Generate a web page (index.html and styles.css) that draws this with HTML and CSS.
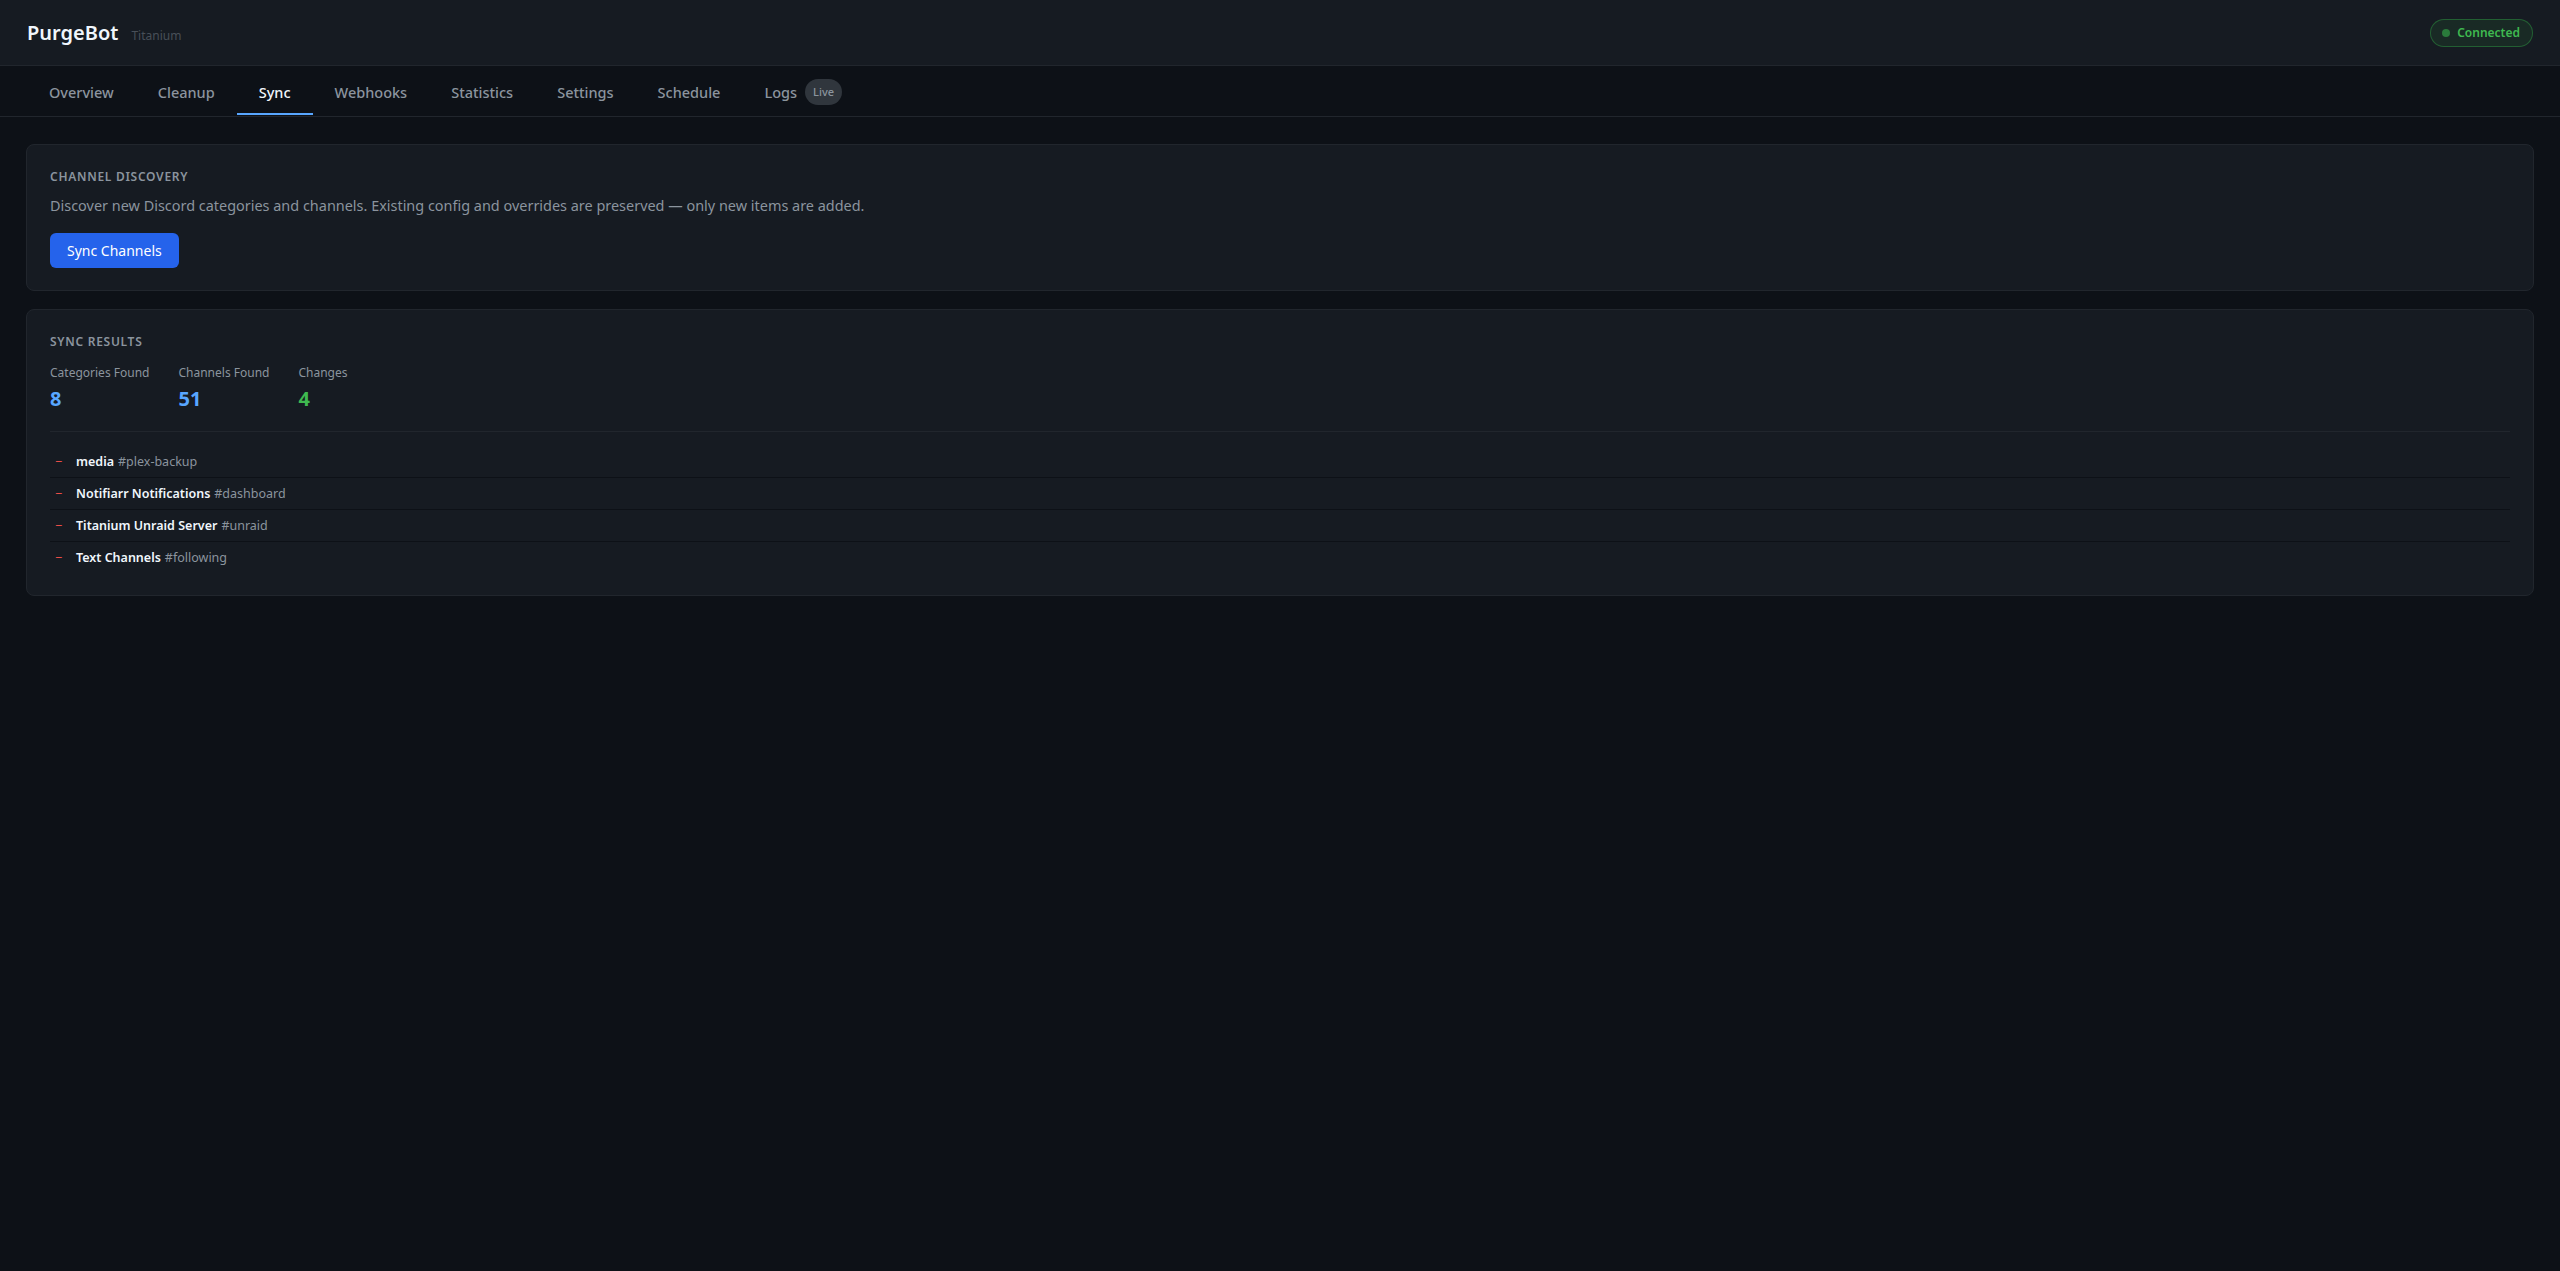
FILE: index.html
```html
<!DOCTYPE html>
<html>
	<head>
		<meta charset="utf-8">
		<title>PurgeBot - Sync</title>
		<link rel="stylesheet" href="styles.css">
	</head>
	<body>
		<header class="topbar">
			<div class="brand">
				<span class="brand-name">PurgeBot</span>
				<span class="brand-server">Titanium</span>
			</div>
			<div class="status"><span class="status-dot"></span>Connected</div>
		</header>
		<nav class="tabs">
			<a class="tab">Overview</a>
			<a class="tab">Cleanup</a>
			<a class="tab active">Sync</a>
			<a class="tab">Webhooks</a>
			<a class="tab">Statistics</a>
			<a class="tab">Settings</a>
			<a class="tab">Schedule</a>
			<a class="tab">Logs <span class="live">Live</span></a>
		</nav>
		<main class="content">
			<section class="card">
				<h2 class="card-title">Channel Discovery</h2>
				<p class="card-desc">Discover new Discord categories and channels. Existing config and overrides are preserved — only new items are added.</p>
				<button class="btn">Sync Channels</button>
			</section>
			<section class="card">
				<h2 class="card-title">Sync Results</h2>
				<div class="stats">
					<div class="stat">
						<div class="stat-label">Categories Found</div>
						<div class="stat-value blue">8</div>
					</div>
					<div class="stat">
						<div class="stat-label">Channels Found</div>
						<div class="stat-value blue">51</div>
					</div>
					<div class="stat">
						<div class="stat-label">Changes</div>
						<div class="stat-value green">4</div>
					</div>
				</div>
				<ul class="changes">
					<li><span class="mark">−</span><b>media</b> <span class="chan">#plex-backup</span></li>
					<li><span class="mark">−</span><b>Notifiarr Notifications</b> <span class="chan">#dashboard</span></li>
					<li><span class="mark">−</span><b>Titanium Unraid Server</b> <span class="chan">#unraid</span></li>
					<li><span class="mark">−</span><b>Text Channels</b> <span class="chan">#following</span></li>
				</ul>
			</section>
		</main>
	</body>
</html>
```

FILE: styles.css
```css
body {
	margin: 0;
	background: #0d1117;
	color: #e6edf3;
	font-family: "Noto Sans", "Open Sans", sans-serif;
	font-size: 14px;
}

/* header */
.topbar {
	height: 65px;
	display: flex;
	align-items: center;
	justify-content: space-between;
	padding: 0 27px;
	background: #161b22;
	border-bottom: 1px solid #21262d;
}
.brand {
	display: flex;
	align-items: baseline;
	gap: 13px;
}
.brand-name {
	font-size: 20px;
	font-weight: 600;
	color: #f0f6fc;
}
.brand-server {
	font-size: 12px;
	color: #484f58;
}
.status {
	display: flex;
	align-items: center;
	gap: 7px;
	height: 26px;
	padding: 0 12px 0 11px;
	border: 1px solid rgba(46, 160, 67, 0.45);
	border-radius: 14px;
	background: rgba(46, 160, 67, 0.12);
	color: #3fb950;
	font-size: 12px;
	font-weight: 600;
}
.status-dot {
	width: 8px;
	height: 8px;
	border-radius: 50%;
	background: #2a7a3b;
}

/* tabs */
.tabs {
	display: flex;
	height: 50px;
	padding: 0 27px;
	border-bottom: 1px solid #21262d;
}
.tab {
	display: flex;
	align-items: center;
	gap: 8px;
	padding: 4px 22px 0;
	color: #8b949e;
	font-size: 14.5px;
	font-weight: 500;
	border-bottom: 2px solid transparent;
	margin-bottom: 1px;
}
.tab.active {
	color: #f0f6fc;
	border-bottom-color: #58a6ff;
}
.live {
	display: inline-block;
	padding: 0 8px;
	border-radius: 13px;
	background: #30363d;
	color: #8b949e;
	font-size: 11px;
	line-height: 26px;
}

/* cards */
.content {
	padding: 27px 26px;
	display: flex;
	flex-direction: column;
	gap: 18px;
}
.card {
	background: #161b22;
	border: 1px solid #21262d;
	border-radius: 8px;
	padding: 23px 23px 22px;
}
.card-title {
	margin: 0;
	font-size: 12px;
	line-height: 18px;
	font-weight: 600;
	letter-spacing: 0.06em;
	text-transform: uppercase;
	color: #8b949e;
}
.card-desc {
	margin: 10px 0 17px;
	font-size: 14.45px;
	line-height: 20px;
	color: #8b949e;
}
.btn {
	height: 35px;
	padding: 0 17px;
	border: none;
	border-radius: 6px;
	background: #2563eb;
	color: #fff;
	font-family: inherit;
	font-size: 14px;
}

/* stats */
.stats {
	display: flex;
	gap: 29px;
	margin-top: 13px;
	padding-bottom: 19px;
	border-bottom: 1px solid #21262d;
}
.stat-label {
	font-size: 12px;
	line-height: 18px;
	color: #8b949e;
}
.stat-value {
	margin-top: 4px;
	font-size: 20px;
	line-height: 26px;
	font-weight: 700;
}
.blue {
	color: #58a6ff;
}
.green {
	color: #3fb950;
}

/* change list */
.changes {
	list-style: none;
	margin: 14px 0 0;
	padding: 0;
}
.changes li {
	display: flex;
	align-items: baseline;
	padding: 7px 0 7px 5px;
	line-height: 17px;
	font-size: 12.5px;
	border-bottom: 1px solid #0d1117;
}
.changes li:last-child {
	border-bottom: none;
}
.changes b {
	color: #f0f6fc;
	font-weight: 600;
	white-space: pre;
}
.mark {
	width: 21px;
	color: #f85149;
}
.chan {
	color: #8b949e;
	margin-left: 4px;
}
```
